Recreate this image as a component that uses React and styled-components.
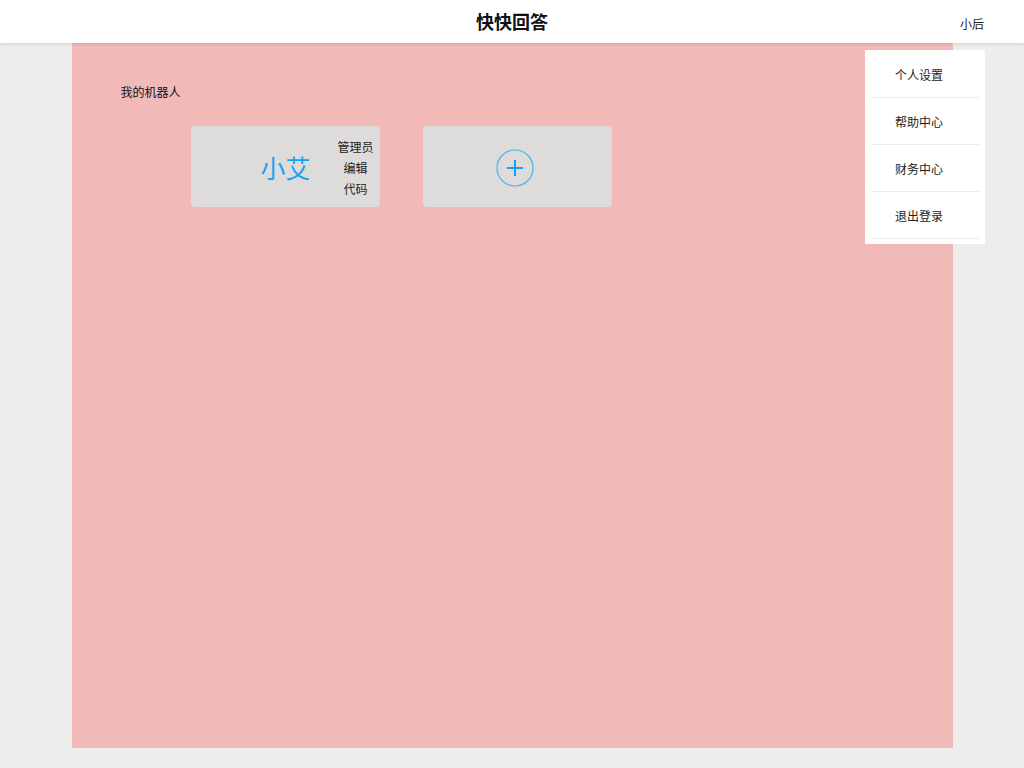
import styled, { createGlobalStyle } from 'styled-components'

const GlobalStyle = createGlobalStyle`
  html, body {
    margin: 0;
    padding: 0;
    background: #ededed;
    font-family: 'Noto Sans CJK SC', 'Noto Sans', sans-serif;
    color: #222;
  }
`

const menuItems = ['个人设置', '帮助中心', '财务中心', '退出登录']

function PlusIcon() {
  return (
    <svg width='38' height='38' viewBox='0 0 38 38'>
      <circle cx='19' cy='19' r='18' fill='none' stroke='#4ab4ef' strokeWidth='1.2' />
      <path d='M19 11 V27 M11 19 H27' stroke='#13a2f2' strokeWidth='2' />
    </svg>
  )
}

function App() {
  return (
    <>
      <GlobalStyle />
      <Header>
        <Title>快快回答</Title>
        <User>小后</User>
      </Header>
      <Main>
        <SectionTitle>我的机器人</SectionTitle>
        <Cards>
          <Card>
            <BotName>小艾</BotName>
            <Links>
              <LinkText>管理员</LinkText>
              <LinkText>编辑</LinkText>
              <LinkText>代码</LinkText>
            </Links>
          </Card>
          <AddCard>
            <PlusIcon />
          </AddCard>
        </Cards>
      </Main>
      <Menu>
        {menuItems.map((item) => (
          <MenuItem key={item}>{item}</MenuItem>
        ))}
      </Menu>
    </>
  )
}

export default App

const Header = styled.header`
  position: relative;
  z-index: 2;
  height: 43px;
  background: #fff;
  box-shadow: 0 1px 3px rgba(0, 0, 0, 0.12);
  display: flex;
  align-items: center;
  justify-content: center;
`

const Title = styled.h1`
  margin: 0 0 2px;
  font-size: 18px;
  font-weight: 700;
  color: #111;
`

const User = styled.span`
  position: absolute;
  right: 40px;
  top: 15px;
  font-size: 12px;
  color: #222;
`

const Main = styled.main`
  width: 881px;
  height: 705px;
  margin: 0 auto;
  box-sizing: border-box;
  background: #f1b9b8;
  padding: 40px 0 0 49px;
`

const SectionTitle = styled.div`
  font-size: 12px;
  line-height: 17px;
  color: #111;
`

const Cards = styled.div`
  display: flex;
  gap: 43px;
  margin: 26px 0 0 70px;
`

const Card = styled.div`
  width: 189px;
  height: 81px;
  box-sizing: border-box;
  border-radius: 4px;
  background: #dddcdb;
  display: grid;
  grid-template-columns: 1fr auto 1fr;
  align-items: center;
`

const BotName = styled.div`
  grid-column: 2;
  font-size: 25px;
  color: #17a3f2;
  padding: 0 0 0 1px;
`

const Links = styled.div`
  grid-column: 3;
  justify-self: end;
  display: flex;
  flex-direction: column;
  align-items: center;
  margin-right: 6px;
  padding-top: 1px;
`

const LinkText = styled.span`
  font-size: 12px;
  line-height: 21px;
  color: #222;
`

const AddCard = styled(Card)`
  display: flex;
  align-items: center;
  justify-content: center;
  padding: 2px 4px 0 0;
`

const Menu = styled.ul`
  position: absolute;
  top: 50px;
  right: 39px;
  width: 120px;
  box-sizing: border-box;
  margin: 0;
  padding: 1px 6px 5px;
  list-style: none;
  background: #fff;
  z-index: 3;
`

const MenuItem = styled.li`
  height: 46px;
  line-height: 47px;
  padding-left: 24px;
  font-size: 12px;
  color: #222;
  border-bottom: 1px solid #ececec;
`
